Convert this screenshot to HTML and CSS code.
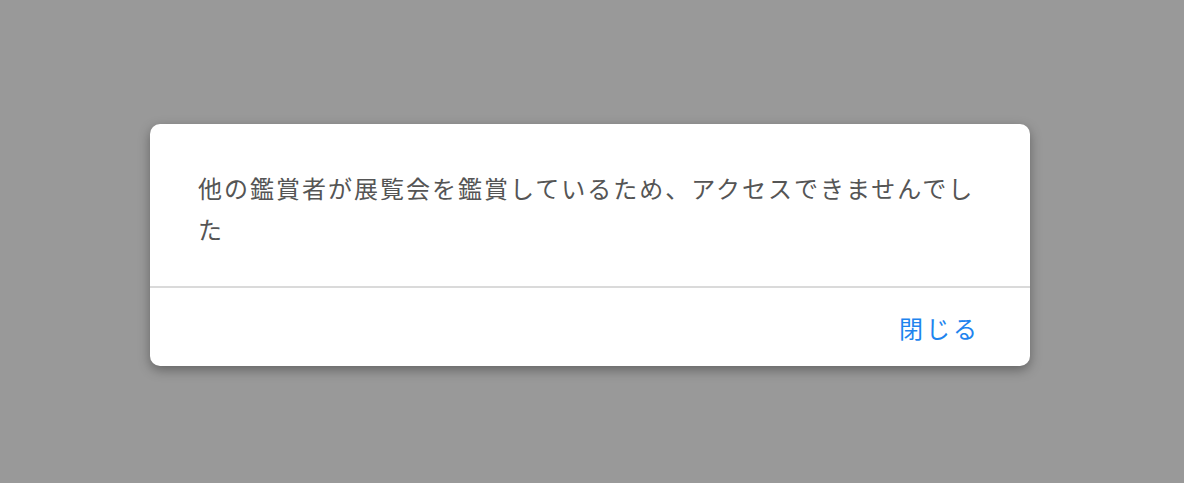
FILE: index.html
```html
<!DOCTYPE html>
<html lang="ja">
<head>
<meta charset="utf-8">
<link rel="stylesheet" href="styles.css">
</head>
<body>
<div class="overlay">
  <div class="dialog">
    <div class="dialog-body">
      <p class="message">他の鑑賞者が展覧会を鑑賞しているため、アクセスできませんでした</p>
    </div>
    <div class="dialog-footer">
      <button class="close-btn">閉じる</button>
    </div>
  </div>
</div>
</body>
</html>
```
FILE: styles.css
```css
html, body {
  margin: 0;
  padding: 0;
  height: 100%;
}
body {
  background: #999999;
  font-family: "Noto Sans CJK JP", "Noto Sans", sans-serif;
}
.overlay {
  display: flex;
  align-items: flex-start;
  padding: 124px 0 0 150px;
}
.dialog {
  width: 880px;
  background: #ffffff;
  border-radius: 10px;
  box-shadow: 0 4px 12px rgba(0, 0, 0, 0.35);
  overflow: hidden;
}
.dialog-body {
  padding: 43px 48px 37px 48px;
  border-bottom: 2px solid #dadada;
}
.message {
  margin: 0;
  font-size: 24px;
  letter-spacing: 2px;
  line-height: 41px;
  color: #555555;
}
.dialog-footer {
  height: 78px;
  display: flex;
  align-items: center;
  justify-content: flex-end;
  padding: 0 50px 0 48px;
}
.close-btn {
  border: none;
  background: none;
  padding: 0;
  font-family: inherit;
  font-size: 24px;
  letter-spacing: 3px;
  color: #1e84ee;
  cursor: pointer;
}
```
